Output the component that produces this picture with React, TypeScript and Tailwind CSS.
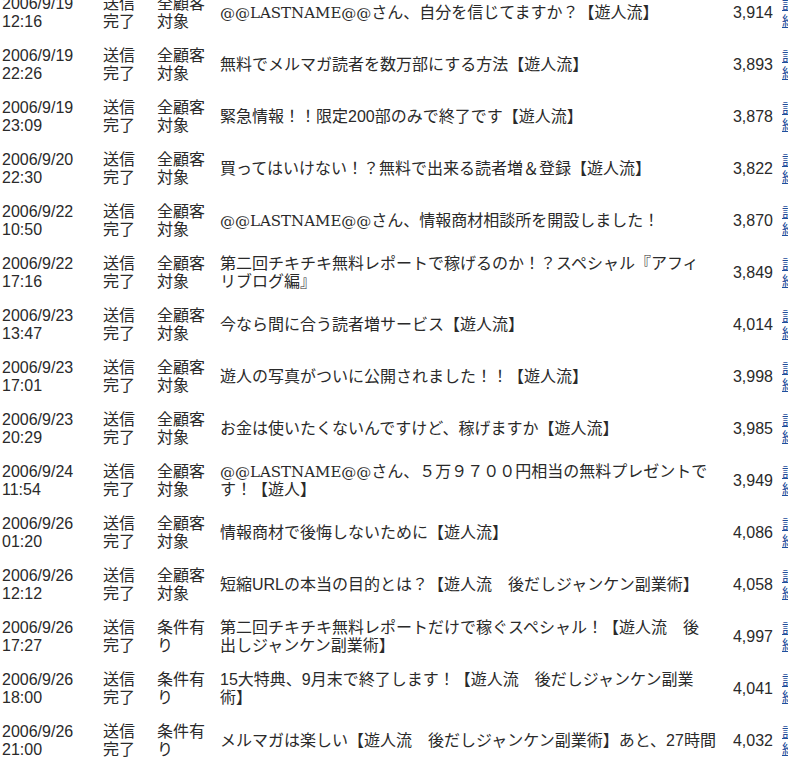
import React from "react";

type Row = { d: string; t: string; target: [string, string]; title: string[]; n: string };

const ALL: [string, string] = ["全顧客", "対象"];
const COND: [string, string] = ["条件有", "り"];

const rows: Row[] = [
  { d: "2006/9/19", t: "12:16", target: ALL, title: ["@@LASTNAME@@さん、自分を信じてますか？【遊人流】"], n: "3,914" },
  { d: "2006/9/19", t: "22:26", target: ALL, title: ["無料でメルマガ読者を数万部にする方法【遊人流】"], n: "3,893" },
  { d: "2006/9/19", t: "23:09", target: ALL, title: ["緊急情報！！限定200部のみで終了です【遊人流】"], n: "3,878" },
  { d: "2006/9/20", t: "22:30", target: ALL, title: ["買ってはいけない！？無料で出来る読者増＆登録【遊人流】"], n: "3,822" },
  { d: "2006/9/22", t: "10:50", target: ALL, title: ["@@LASTNAME@@さん、情報商材相談所を開設しました！"], n: "3,870" },
  { d: "2006/9/22", t: "17:16", target: ALL, title: ["第二回チキチキ無料レポートで稼げるのか！？スペシャル『アフィ", "リブログ編』"], n: "3,849" },
  { d: "2006/9/23", t: "13:47", target: ALL, title: ["今なら間に合う読者増サービス【遊人流】"], n: "4,014" },
  { d: "2006/9/23", t: "17:01", target: ALL, title: ["遊人の写真がついに公開されました！！【遊人流】"], n: "3,998" },
  { d: "2006/9/23", t: "20:29", target: ALL, title: ["お金は使いたくないんですけど、稼げますか【遊人流】"], n: "3,985" },
  { d: "2006/9/24", t: "11:54", target: ALL, title: ["@@LASTNAME@@さん、５万９７００円相当の無料プレゼントで", "す！【遊人】"], n: "3,949" },
  { d: "2006/9/26", t: "01:20", target: ALL, title: ["情報商材で後悔しないために【遊人流】"], n: "4,086" },
  { d: "2006/9/26", t: "12:12", target: ALL, title: ["短縮URLの本当の目的とは？【遊人流　後だしジャンケン副業術】"], n: "4,058" },
  { d: "2006/9/26", t: "17:27", target: COND, title: ["第二回チキチキ無料レポートだけで稼ぐスペシャル！【遊人流　後", "出しジャンケン副業術】"], n: "4,997" },
  { d: "2006/9/26", t: "18:00", target: COND, title: ["15大特典、9月末で終了します！【遊人流　後だしジャンケン副業", "術】"], n: "4,041" },
  { d: "2006/9/26", t: "21:00", target: COND, title: ["メルマガは楽しい【遊人流　後だしジャンケン副業術】あと、27時間"], n: "4,032" },
];

function TitleLine({ text }: { text: string }) {
  const parts = text.split("@@LASTNAME@@");
  return (
    <div className="whitespace-nowrap">
      {parts.map((p, i) => (
        <React.Fragment key={i}>
          {i > 0 && (
            <span className="font-['DejaVu_Serif',serif] text-[15px]">@@LASTNAME@@</span>
          )}
          {p}
        </React.Fragment>
      ))}
    </div>
  );
}

export default function App() {
  return (
    <div className="w-[788px] h-[781px] overflow-hidden bg-white text-[#2a2a2a] text-[16px] leading-[18px] font-['Liberation_Sans','Noto_Sans_CJK_JP',sans-serif]">
      <div className="-mt-[13px] flex flex-col">
        {rows.map((r, i) => (
          <div key={i} className="flex h-[52px] items-center">
            <div className="w-[103px] shrink-0 pl-[2px]">
              <div>{r.d}</div>
              <div>{r.t}</div>
            </div>
            <div className="w-[54px] shrink-0">
              <div>送信</div>
              <div>完了</div>
            </div>
            <div className="w-[63px] shrink-0">
              <div>{r.target[0]}</div>
              <div>{r.target[1]}</div>
            </div>
            <div className="w-[500px] shrink-0">
              {r.title.map((l, j) => (
                <TitleLine key={j} text={l} />
              ))}
            </div>
            <div className="w-[53px] shrink-0 text-right">{r.n}</div>
            <div className="w-[9px] shrink-0" />
            <a className="flex shrink-0 flex-col text-[#1f4e9c] underline text-[14px] leading-[17px]">
              <span>詳</span>
              <span>細</span>
            </a>
          </div>
        ))}
      </div>
    </div>
  );
}
